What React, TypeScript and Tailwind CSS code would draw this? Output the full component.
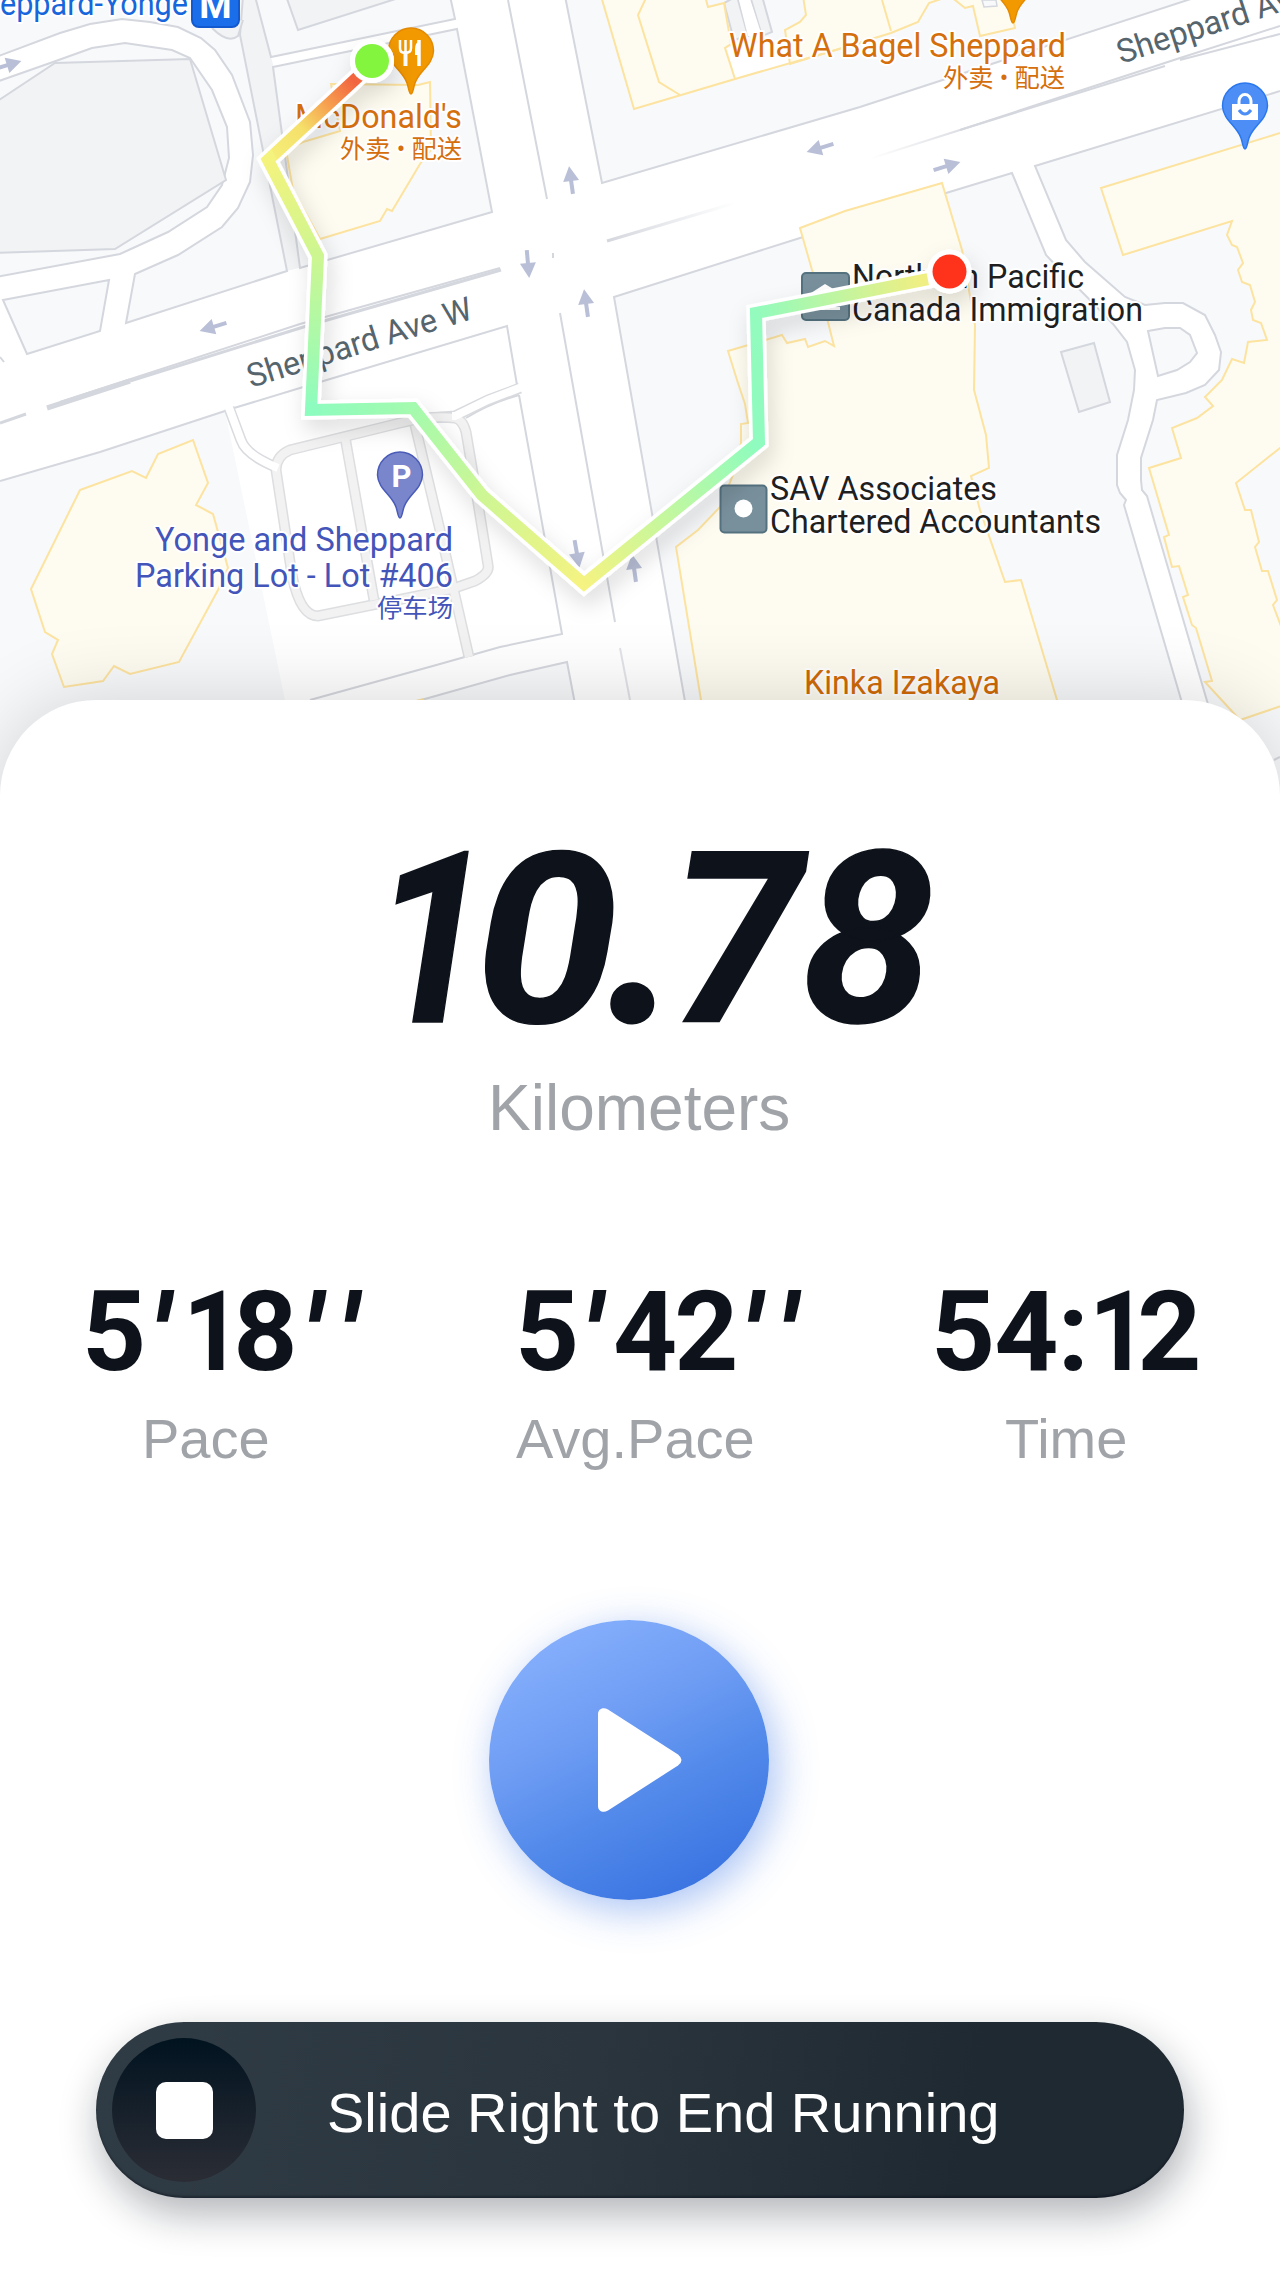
import React from "react";

const BLOCK = "#f7f9fb";
const EDGE = "#d5d7de";
const GREY = "#f1f3f4";
const CREAM = "#fefcf0";
const GOLD = "#fde3a0";

const blocks = [
  "-4,-4 243,-4 240,35 287,271 126,323 135,274 178,255 222,227 238,208 250,182 253,155 250,122 232,75 215,50 201,38 178,27 150,22 122,19 90,24 60,33 -4,57",
  "-4,82 53,62 92,48 125,43 172,50 190,58 212,90 227,127 229,158 222,185 207,207 168,232 120,254 -4,277",
  "3,300 109,280 100,331 27,354",
  "256,0 271,57 455,19 450,-4 256,-4",
  "273,67 457,29 492,212 300,268",
  "565,-4 602,183 860,107 1200,-4",
  "614,297 800,238 946,193 1012,173 1046,255 1060,270 1090,300 1113,324 1127,342 1135,370 1134,390 1128,420 1117,455 1117,485 1120,493 1126,500 1124,505 1190,730 690,730",
  "1035,166 1290,88 1290,800 1236,800 1147,496 1142,490 1141,480 1141,458 1153,420 1157,400 1186,393 1205,385 1219,370 1221,352 1215,335 1205,315 1183,303 1165,303 1145,305 1125,297 1085,262 1066,240",
  "1148,331 1165,328 1180,328 1190,335 1197,353 1190,362 1177,370 1158,376",
  "400,706 510,675 567,662 580,730 400,730",
];

const greyBuildings = [
  "-4,102 55,63 190,59 226,180 115,249 -4,253",
  "286,-4 298,30 405,-4",
  "1061,352 1094,343 1110,402 1079,412",
  "724,3 734,40 748,36 737,-4",
  "750,-4 762,36 772,32 762,-4",
];

const creamBuildings = [
  "331,84 340,131 303,142 286,150 293,190 320,239 380,221 387,209 392,211 420,164 431,150 430,82 418,85",
  "601,-4 634,109 735,79 725,48 731,44 724,3 708,7 705,-4",
  "803,-4 806,15 800,22 785,30 790,64 891,33 918,22 929,3 950,-4",
  "950,-4 965,8 973,6 980,36 1015,28 1008,-4",
  "800,228 845,211 942,183 962,250 975,325 974,390 986,435 989,468 971,476 980,510 1005,582 1021,580 1066,730 706,730 701,700 676,547 698,530 720,507 735,470 741,443 741,424 748,423 745,404 737,380 728,351 745,346 782,335 787,343 805,339 808,347 825,341 834,346 820,290 812,270",
  "1101,188 1290,130 1290,703 1240,720 1205,682 1212,681 1196,628 1192,625 1183,597 1188,595 1179,566 1172,567 1164,537 1169,535 1149,468 1181,458 1172,428 1197,418 1213,406 1205,397 1222,380 1232,359 1244,363 1248,342 1267,340 1261,323 1253,320 1251,310 1255,302 1250,285 1242,282 1238,270 1243,263 1237,247 1232,245 1227,235 1232,221 1123,255",
  "80,490 132,471 146,478 158,454 193,440 208,483 196,505 213,514 228,568 218,590 179,662 130,674 114,666 103,681 64,687 52,654 58,640 45,632 31,589",
];

const parkingLanes = [
  "M276,470 Q276,456 290,450 L400,423 Q430,415 455,418 Q463,420 466,432 L477,497 L488,565 Q490,573 475,581 L452,589 L318,616 Q300,616 292,575 Z",
  "M345,437 L374,600",
  "M415,425 L440,530 L469,657",
];

const arrows: [number, number, number][] = [
  [8, 65, -17],
  [213, 327, 163],
  [820, 148, 163],
  [947, 166, -17],
  [571, 180, -98],
  [528, 264, 85],
  [586, 303, -98],
  [577, 554, 80],
  [634, 568, -98],
];

const routePoints = "361,74 268,160 318,256 311,410 413,408 482,495 584,584 759,442 756,313 949,275";

const routeSegments: [number, number, number, number, string, string][] = [
  [353, 81, 268, 160, "#f2663f", "#f5f07b"],
  [268, 160, 318, 256, "#f4f37d", "#cdf691"],
  [318, 256, 311, 410, "#cdf691", "#8dfcbf"],
  [311, 410, 413, 408, "#8dfcbf", "#a4faae"],
  [413, 408, 482, 495, "#a4faae", "#cdf694"],
  [482, 495, 584, 584, "#cdf694", "#f5f381"],
  [584, 584, 759, 442, "#f5f381", "#8dfcbf"],
  [759, 442, 756, 313, "#90fbbf", "#92fbbd"],
  [756, 313, 920, 281, "#92fbbd", "#efef83"],
];

function Pin({ x, y, fill, stroke, children }: { x: number; y: number; fill: string; stroke: string; children?: React.ReactNode }) {
  return (
    <g transform={`translate(${x} ${y})`}>
      <path
        d="M0,43 C-2,43 -2,38 -4,32 C-8,20 -22,14 -22.5,0 A22.5,23 0 0 1 22.5,0 C22,14 8,20 4,32 C2,38 2,43 0,43 Z"
        fill={fill}
        stroke={stroke}
        strokeWidth="1.5"
      />
      {children}
    </g>
  );
}

function Label({ x, y, w, color, end, size = 33, children }: { x: number; y: number; w: number; color: string; end?: boolean; size?: number; children: string }) {
  return (
    <text
      x={x}
      y={y}
      fontSize={size}
      textLength={w}
      lengthAdjust="spacingAndGlyphs"
      textAnchor={end ? "end" : "start"}
      fill={color}
      stroke="#fff"
      strokeWidth="4"
      strokeLinejoin="round"
      paintOrder="stroke"
    >
      {children}
    </text>
  );
}

function RouteMap() {
  return (
    <svg
      viewBox="0 0 1280 800"
      className="block h-[800px] w-full bg-white font-['Roboto','Noto_Sans_CJK_SC',sans-serif]"
      aria-label="Route map"
    >
      <defs>
        {routeSegments.map(([x1, y1, x2, y2, a, b], i) => (
          <linearGradient key={i} id={`seg${i}`} gradientUnits="userSpaceOnUse" x1={x1} y1={y1} x2={x2} y2={y2}>
            <stop offset="0" stopColor={a} />
            {i === 0 && <stop offset="0.3" stopColor="#f6a04f" />}
            {i === 0 && <stop offset="0.6" stopColor="#f5e06a" />}
            <stop offset="1" stopColor={b} />
          </linearGradient>
        ))}
        <linearGradient id="fadeOut" gradientUnits="userSpaceOnUse" x1="607" y1="0" x2="735" y2="0">
          <stop offset="0" stopColor={EDGE} />
          <stop offset="1" stopColor={EDGE} stopOpacity="0" />
        </linearGradient>
        <linearGradient id="fadeIn" gradientUnits="userSpaceOnUse" x1="870" y1="0" x2="980" y2="0">
          <stop offset="0" stopColor={EDGE} stopOpacity="0" />
          <stop offset="1" stopColor={EDGE} />
        </linearGradient>
        <mask id="routeMask" maskUnits="userSpaceOnUse" x="0" y="0" width="1280" height="800">
          <polyline points={routePoints} fill="none" stroke="#fff" strokeWidth="12" strokeMiterlimit="10" />
        </mask>
        <filter id="routeShadow" x="-10%" y="-10%" width="120%" height="125%">
          <feDropShadow dx="4" dy="10" stdDeviation="11" floodColor="#000" floodOpacity="0.14" />
        </filter>
      </defs>

      {/* Land */}
      <polygon points="240,-4 255,-4 271,57 274,68 322,262 287,271 240,35" fill={GREY} />
      <g fill={BLOCK} stroke={EDGE} strokeWidth="2">
        {blocks.map((p) => (
          <polygon key={p} points={p} />
        ))}
      </g>
      <polygon points="0,481 100,452 225,411 285,700 285,800 0,800" fill={BLOCK} />
      <path d="M212,28 Q228,44 238,36 L243,20" fill={GREY} stroke={EDGE} strokeWidth="2" />
      <g fill={GREY} stroke={EDGE} strokeWidth="2">
        {greyBuildings.map((p) => (
          <polygon key={p} points={p} />
        ))}
      </g>
      <polygon points="738,-4 749,-4 762,36 748,36" fill="#fff" />
      <polygon points="727,48 790,38 790,62 735,78" fill="#fff" />
      <g fill={CREAM} stroke={GOLD} strokeWidth="2">
        {creamBuildings.map((p) => (
          <polygon key={p} points={p} />
        ))}
        <path d="M646,-2 L638,15 L659,82 L680,95 M882,0 L891,31 M735,79 L860,43" fill="none" />
        <polygon points="1290,440 1236,483 1245,510 1251,510 1259,542 1255,547 1262,571 1268,571 1277,600 1273,605 1290,650" fill={BLOCK} />
        <path d="M416,701 L424,699" fill="none" />
      </g>
      <polygon points="982,0 984,7 997,6 996,0" fill={BLOCK} stroke={EDGE} strokeWidth="1.5" />

      {/* Road edges */}
      <g fill="none" stroke={EDGE} strokeWidth="2">
        <path d="M0,357 L4,362 M0,481 L100,452 L225,411 M234,408 L300,388 L507,326 L517,385 L490,395 L455,412 M519,395 L562,634 L500,647 L440,664 L310,700 M519,395 Q490,403 466,418" />
        <path d="M508,0 L547,199 M560,313 L615,622" />
        <path d="M620,648 L630,700" strokeOpacity="0.7" />
        <path d="M60,402 L300,324 L500,268" />
        <path d="M47,408 L130,381" strokeWidth="5" />
        <path d="M130,381 L310,325 L501,270 M0,423 L26,414" strokeWidth="3" />
        <path d="M607,241 L745,200" stroke="url(#fadeOut)" strokeWidth="3" />
        <path d="M850,165 L960,130 L1165,66" stroke="url(#fadeIn)" />
        <path d="M960,130 L1180,58 L1280,26 M1180,60 L1280,34" />
        <path d="M1274,760 L1280,757" />
        <path d="M553,253 V258" />
      </g>

      {/* Parking lot */}
      <g fill="none">
        {parkingLanes.map((d) => (
          <path key={d} d={d} stroke="#dddee0" strokeWidth="11" />
        ))}
        <path d="M229,408 L241,440 Q246,455 276,467 M430,418 L455,416 L488,400 L520,388" stroke="#d9dbdf" strokeWidth="11" />
        {parkingLanes.map((d) => (
          <path key={d} d={d} stroke="#f2f2f3" strokeWidth="8" />
        ))}
        <path d="M228,405 L241,440 Q246,455 278,468 M452,416 L455,416 L488,400 L522,387" stroke="#fff" strokeWidth="8" />
      </g>

      <g fill="#b9bfd7" stroke="#b9bfd7">
        {arrows.map(([x, y, r]) => (
          <g key={`${x}-${y}`} transform={`translate(${x} ${y}) rotate(${r})`}>
            <path d="M-14,0 H2" strokeWidth="4" />
            <path d="M-1,-8 L14,0 L-1,8 Z" stroke="none" />
          </g>
        ))}
      </g>

      {/* Labels */}
      <g fontSize="33" fill="#56656d" stroke="#fff" strokeWidth="3" paintOrder="stroke">
        <text transform="translate(251 388) rotate(-17.3)" textLength="234" lengthAdjust="spacingAndGlyphs">Sheppard Ave W</text>
        <text transform="translate(1121 64) rotate(-18)" textLength="225" lengthAdjust="spacingAndGlyphs">Sheppard Ave E</text>
      </g>
      <Label x={188} y={15} w={223} color="#1766db" end>Sheppard-Yonge</Label>
      <rect x="192" y="-20" width="47" height="47" rx="7" fill="#1a6eea" stroke="#1259cf" strokeWidth="2" />
      <text x="215.5" y="18" fontSize="37" fontWeight="700" textAnchor="middle" fill="#fff">M</text>

      <Pin x={411} y={51} fill="#f29900" stroke="#e58a00">
        <g fill="none" stroke="#fff" strokeWidth="2.5">
          <path d="M-11,-11 V-3 Q-11,2 -6,2 Q0,2 0,-3 V-11 M-5.5,-11 V2" />
          <path d="M-5.5,0 V15" strokeWidth="4" />
          <path d="M9,-11 Q4,-8 4,-2 V4 H9 V15 H9 Z" fill="#fff" stroke="none" />
          <path d="M8,-11 V15" strokeWidth="3.5" />
        </g>
      </Pin>
      <Pin x={1013} y={-20} fill="#f29900" stroke="#e58a00" />
      <Pin x={1245} y={106} fill="#4c8df6" stroke="#2b78ee">
        <path d="M-13,-2 H13 V14 H-13 Z" fill="#fff" />
        <path d="M-6,-2 V-5 A6,6.500 0 0 1 6,-5 V-2" fill="none" stroke="#fff" strokeWidth="3" />
        <path d="M-6,4 Q0,12 6,4" fill="none" stroke="#4c8df6" strokeWidth="3" />
      </Pin>
      <Pin x={400} y={475} fill="#7986cb" stroke="#4a5bb8">
        <text x="1.500" y="12" fontSize="31" fontWeight="700" textAnchor="middle" fill="#fff">P</text>
      </Pin>

      <Label x={462} y={128} w={167} color="#d56e0c" end>McDonald's</Label>
      <Label x={462} y={158} w={122} color="#d56e0c" size={25} end>外卖 • 配送</Label>
      <Label x={729} y={57} w={337} color="#d56e0c">What A Bagel Sheppard</Label>
      <Label x={1065} y={87} w={122} color="#d56e0c" size={25} end>外卖 • 配送</Label>
      <Label x={804} y={694} w={196} color="#cf6a08">Kinka Izakaya</Label>
      <Label x={453} y={551} w={298} color="#4355b9" end>Yonge and Sheppard</Label>
      <Label x={453} y={587} w={318} color="#4355b9" end>Parking Lot - Lot #406</Label>
      <Label x={453} y={617} w={76} color="#4355b9" size={25} end>停车场</Label>

      <rect x="802" y="273" width="47" height="47" rx="4" fill="#78909c" stroke="#54717f" strokeWidth="2" />
      <path d="M811,293 L825,284 L840,293 V296 H811 Z M811,307 H840 V310 H811 Z" fill="#fff" />
      <rect x="720.500" y="485.500" width="46" height="47" rx="4" fill="#78909c" stroke="#54717f" strokeWidth="2" />
      <circle cx="743.500" cy="508.500" r="9" fill="#fff" />
      <Label x={852} y={288} w={232} color="#1f1f1f">Northern Pacific</Label>
      <Label x={852} y={321} w={291} color="#1f1f1f">Canada Immigration</Label>
      <Label x={770} y={500} w={227} color="#1f1f1f">SAV Associates</Label>
      <Label x={770} y={533} w={331} color="#1f1f1f">Chartered Accountants</Label>

      {/* Running route */}
      <g filter="url(#routeShadow)">
        <polyline points={routePoints} fill="none" stroke="#fff" strokeWidth="19" strokeMiterlimit="10" />
        <circle cx="372" cy="61" r="22" fill="#fff" />
        <circle cx="949.500" cy="271.500" r="22" fill="#fff" />
      </g>
      <g mask="url(#routeMask)">
        {routeSegments.map(([x1, y1, x2, y2], i) => (
          <line key={i} x1={x1} y1={y1} x2={x2} y2={y2} stroke={`url(#seg${i})`} strokeWidth="16" strokeLinecap="square" />
        ))}
      </g>
      <circle cx="372" cy="61" r="22" fill="#fff" />
      <circle cx="949.500" cy="271.500" r="22" fill="#fff" />
      <circle cx="372" cy="61" r="17" fill="#84f53f" />
      <circle cx="949.500" cy="271.500" r="17" fill="#ff331c" />
    </svg>
  );
}

function Figure({ children }: { children: React.ReactNode }) {
  return <div className="whitespace-nowrap text-[112px] font-bold leading-none">{children}</div>;
}

export default function App() {
  return (
    <main className="flex h-[2278px] w-[1280px] flex-col overflow-hidden bg-white">
      <RouteMap />
      <section className="relative -mt-[100px] flex h-[1578px] flex-col rounded-t-[96px] bg-white pt-[121px] font-['Roboto',sans-serif] text-[#0e131b] shadow-[0_0_80px_rgba(0,0,0,0.16)]">
        <div className="whitespace-nowrap pl-[366px] text-[238px] font-bold italic leading-[240px] [-webkit-text-stroke:1.5px_#0e131b]">
          <span className="inline-block scale-x-[0.9] tracking-[-18px]">1</span>
          <span className="inline-block scale-x-[1.08] tracking-[-3px]">0</span>
          <span className="inline-block origin-[50%_84%] scale-[1.15] tracking-[-7px]">.</span>
          <span className="tracking-[-1px]">7</span>
          <span>8</span>
        </div>
        <p className="mt-[15px] pl-[488px] font-['Liberation_Sans',sans-serif] text-[64px] leading-none text-[#a0a3a8]">Kilometers</p>

        <div className="mt-[136px] grid grid-cols-[433px_415px_auto] pl-[81px]">
          <div>
            <Figure>
              <span className="pl-px tracking-[5px]">5</span>
              <span className="relative top-[5px] font-black italic tracking-[13px]">'</span>
              <span className="inline-block scale-x-[0.92] tracking-[-12px]">1</span>
              <span className="tracking-[6px]">8</span>
              <span className="relative top-[5px] font-black italic tracking-[21px]">''</span>
            </Figure>
            <p className="mt-[23px] pl-[61px] font-['Liberation_Sans',sans-serif] text-[56px] leading-none text-[#a0a3a8]">Pace</p>
          </div>
          <div>
            <Figure>
              <span className="pl-px tracking-[4px]">5</span>
              <span className="relative top-[5px] font-black italic tracking-[13px]">'</span>
              <span className="tracking-[-3px]">4</span>
              <span className="tracking-[4px]">2</span>
              <span className="relative top-[5px] font-black italic tracking-[21px]">''</span>
            </Figure>
            <p className="mt-[23px] pl-[2px] font-['Liberation_Sans',sans-serif] text-[56px] leading-none text-[#a0a3a8]">Avg.Pace</p>
          </div>
          <div className="-mr-1">
            <Figure>
              <span className="pl-[2px] tracking-[-1px]">54</span>
              <span className="tracking-[-2px]">:</span>
              <span className="inline-block scale-x-[0.92] tracking-[-14px]">1</span>
              <span>2</span>
            </Figure>
            <p className="mt-[23px] pl-[76px] font-['Liberation_Sans',sans-serif] text-[56px] leading-none text-[#a0a3a8]">Time</p>
          </div>
        </div>

        <button
          aria-label="Resume"
          className="mt-[153px] ml-[489px] flex size-[280px] shrink-0 items-center justify-center rounded-full bg-[linear-gradient(153deg,#8ab3fe_5%,#6f9df4_38%,#5189ea_62%,#356fdf_95%)] shadow-[7px_10px_40px_rgba(62,120,230,0.45)]"
        >
          <svg viewBox="0 0 84 104" className="ml-[21px] h-[104px] w-[84px]" fill="#fff">
            <path d="M0,6 C0,1 5,-1.500 10,1.500 L80,46.500 Q87,52 80,57.500 L10,102.500 C5,105.500 0,103 0,98 Z" />
          </svg>
        </button>

        <div className="mx-24 mt-[122px] flex h-44 shrink-0 items-center rounded-full bg-[linear-gradient(100deg,#303c45,#2a353e_45%,#1f2932_80%,#1f2932)] pl-4 shadow-[4px_16px_40px_rgba(10,20,30,0.32),inset_0_-2px_2px_rgba(0,10,20,0.35)]">
          <div className="flex size-36 items-center justify-center rounded-full bg-linear-to-b from-[#021320] to-[#2b2d35]">
            <div className="size-[57px] rounded-[10px] bg-white" />
          </div>
          <span className="pt-[6px] pl-[71px] font-['Liberation_Sans',sans-serif] text-[56px] leading-none whitespace-nowrap text-white">Slide Right to End Running</span>
        </div>
      </section>
    </main>
  );
}
